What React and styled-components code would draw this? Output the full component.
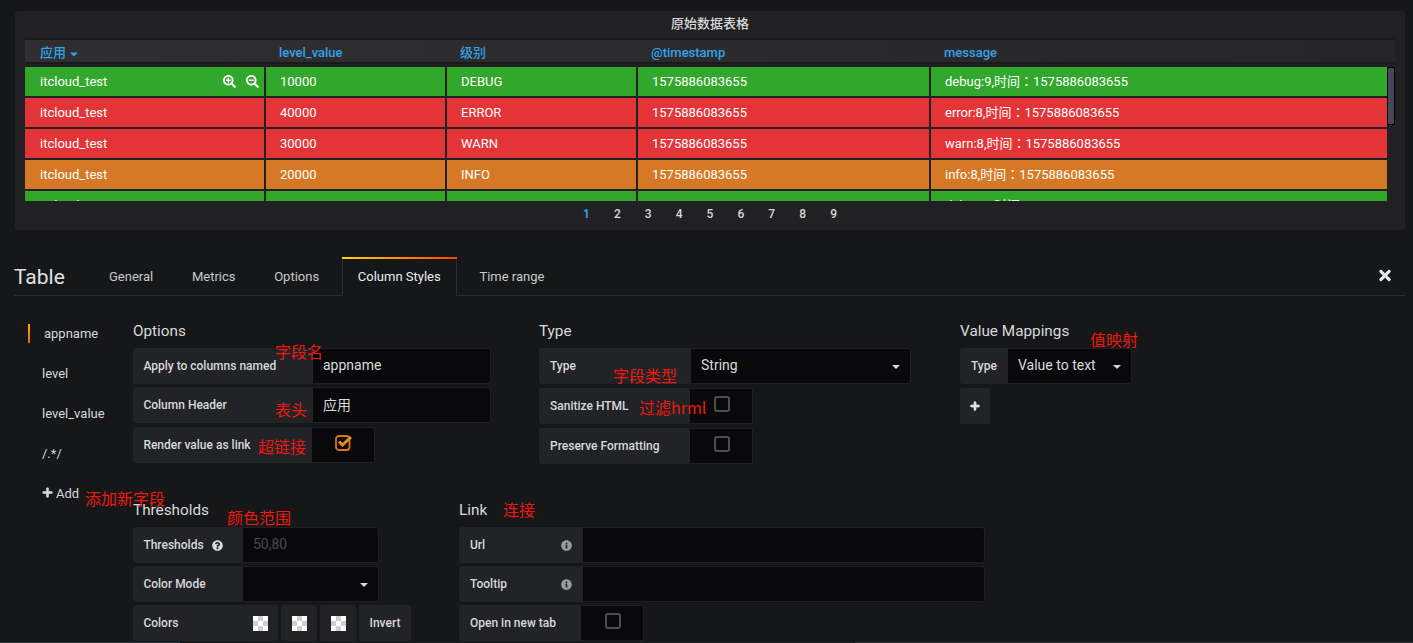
import React from 'react';
import styled, { createGlobalStyle } from 'styled-components';
import { FaSearchPlus, FaSearchMinus, FaCaretDown, FaTimes, FaPlus, FaInfoCircle, FaQuestionCircle } from 'react-icons/fa';

const Global = createGlobalStyle`
  html, body { margin: 0; padding: 0; background: #161719; }
  body { font-family: Roboto, "Noto Sans CJK SC", sans-serif; color: #d8d9da; font-size: 13px; overflow: hidden; }
  * { box-sizing: border-box; }
`;

const Page = styled.div`
  position: relative;
  width: 1413px;
  height: 643px;
  overflow: hidden;
  padding-top: 11px;
`;

const Panel = styled.section`
  width: 1390px;
  height: 219px;
  margin-left: 15px;
  background: #212124;
  border-radius: 3px;
  padding: 0 10px;
`;
const PanelTitle = styled.div`
  height: 27px;
  line-height: 25px;
  text-align: center;
  font-size: 13px;
  font-weight: 500;
  color: #d8d9da;
`;
const HeadRow = styled.div`
  display: grid;
  grid-template-columns: 241px 181px 191px 293px 1fr;
  height: 26px;
  border-top: 2px solid #1b1b1d;
  border-bottom: 2px solid #1b1b1d;
  background: linear-gradient(90deg, #2f2f32 0%, #2b2b2e 50%, #262628 100%);
`;
const HeadCell = styled.div`
  padding: 1px 0 0 13px;
  line-height: 24px;
  font-weight: 500;
  font-size: 13px;
  color: #33a2e5;
  display: flex;
  align-items: center;
  gap: 3px;
  svg { width: 10px; height: 12px; margin-top: 1px; }
  &:first-child { padding-left: 15px; }
`;
const Rows = styled.div`
  height: 137px;
  padding-top: 3px;
  overflow: hidden;
  position: relative;
`;
const Row = styled.div`
  display: grid;
  grid-template-columns: 239px 179px 189px 291px 456px;
  column-gap: 2px;
  margin-bottom: 2px;
  width: 1362px;
`;
const Cell = styled.div`
  height: 29px;
  background: ${p => p.$bg};
  color: #fff;
  font-family: Roboto, "Noto Sans CJK TC", sans-serif;
  font-size: 13px;
  line-height: 29px;
  padding-left: 14px;
  display: flex;
  justify-content: space-between;
  white-space: nowrap;
  &:first-child { padding-left: 15px; }
`;
const CellTools = styled.span`
  display: flex;
  align-items: center;
  gap: 10px;
  padding-right: 5px;
  svg { width: 13px; height: 13px; }
`;
const Scrollbar = styled.div`
  position: absolute;
  right: 0;
  top: 3px;
  width: 8px;
  height: 58px;
  background: #44465a;
  border: 1px solid #000;
  border-radius: 1px;
`;
const Pager = styled.div`
  height: 29px;
  padding-bottom: 4px;
  display: flex;
  justify-content: center;
  align-items: center;
`;
const PageNo = styled.span`
  width: 30.9px;
  text-align: center;
  font-size: 12px;
  font-weight: ${p => (p.$active ? 700 : 500)};
  color: ${p => (p.$active ? '#33a2e5' : '#d8d9da')};
`;

const Editor = styled.section`
  margin: 27px 8px 0 14px;
`;
const TabBar = styled.div`
  display: flex;
  align-items: flex-end;
  height: 39px;
  border-bottom: 1px solid #2c2d30;
  position: relative;
`;
const EditorTitle = styled.h2`
  margin: 0;
  width: 79px;
  font-size: 21px;
  font-weight: 400;
  line-height: 36px;
  color: #e0e0e1;
`;
const Tabs = styled.div`
  display: flex;
  gap: 6.7px;
`;
const Tab = styled.div`
  height: 39px;
  line-height: 40px;
  padding: 0 16px;
  font-size: 13px;
  color: ${p => (p.$active ? '#e9edf2' : '#c7c9cb')};
  margin-bottom: -1px;
  position: relative;
  ${p => p.$active && `
    background: #161719;
    border-left: 1px solid #2c2d30;
    border-right: 1px solid #2c2d30;
    padding: 0 15px;
    &::before {
      content: '';
      position: absolute;
      left: -1px; right: -1px; top: 0; height: 2px;
      background: linear-gradient(90deg, #ffd500, #ff4400);
    }
  `}
`;
const CloseBtn = styled.span`
  position: absolute;
  right: 14px;
  top: 10px;
  color: #e4e8ee;
  svg { width: 12px; height: 17px; display: block; }
`;
const Body = styled.div`
  display: flex;
  padding: 25px 0 0 14px;
`;
const SideNav = styled.nav`
  width: 105px;
  flex: none;
  padding-top: 3px;
`;
const NavItem = styled.div`
  height: 40px;
  line-height: 20px;
  font-size: 13px;
  color: #d8d9da;
  padding-left: ${p => (p.$active ? '16px' : '14px')};
  position: relative;
  ${p => p.$active && `
    &::before {
      content: '';
      position: absolute;
      left: 0; top: 0; height: 19px; width: 2px;
      background: linear-gradient(180deg, #ffb000, #ff5a00);
    }
  `}
`;
const AddItem = styled(NavItem)`
  display: flex;
  align-items: flex-start;
  gap: 3px;
  svg { width: 11px; height: 11px; margin-top: 3px; stroke: currentColor; stroke-width: 30; }
`;
const Main = styled.div`
  flex: 1;
  min-width: 0;
`;
const SectionRow = styled.div`
  display: flex;
  margin-bottom: ${p => p.$mb || 0}px;
`;
const Section = styled.div`
  width: ${p => p.$w}px;
  margin-right: ${p => p.$mr || 0}px;
  flex: none;
`;
const Heading = styled.h5`
  margin: 0 0 7px;
  height: 20px;
  line-height: 21px;
  font-size: 15.3px;
  font-weight: 400;
  color: #d8d9da;
`;
const FormRow = styled.div`
  display: flex;
  height: 36px;
  margin-bottom: ${p => p.$gap ?? 4}px;
`;
const Label = styled.label`
  width: ${p => p.$w}px;
  flex: none;
  background: #212327;
  border-radius: 3px 0 0 3px;
  padding: 0 11px;
  font-size: 12px;
  font-weight: 500;
  color: #d8d9da;
  display: flex;
  align-items: center;
  justify-content: ${p => (p.$between ? 'space-between' : 'flex-start')};
  gap: 8px;
  white-space: nowrap;
  svg { flex: none; }
`;
const TightLabel = styled(Label)`
  padding-left: 10.4px;
`;
const InfoGlyph = styled(FaInfoCircle)`
  width: 11px; height: 11px; color: #9a9b9d;
`;
const QuestionGlyph = styled(FaQuestionCircle)`
  width: 11px; height: 11px; color: #d8d9da;
`;
const Field = styled.div`
  width: ${p => p.$w}px;
  flex: none;
  background: #09090b;
  border: 1px solid #1f2023;
  border-left: 0;
  border-radius: 0 3px 3px 0;
  padding-left: 10px;
  padding-right: 10px;
  font-size: 14px;
  color: ${p => (p.$muted ? '#4a4b4d' : '#d8d9da')};
  display: flex;
  align-items: center;
  justify-content: space-between;
  padding-bottom: 3px;
`;
const Caret = styled.span`
  width: 0;
  height: 0;
  border-left: 4px solid transparent;
  border-right: 4px solid transparent;
  border-top: 4px solid #d8d9da;
  margin-top: 5px;
`;
const CheckCell = styled.div`
  width: 63px;
  flex: none;
  background: #09090b;
  border: 1px solid #1f2023;
  border-left: 0;
  display: flex;
  align-items: center;
  justify-content: center;
  padding: 0 0 4px 1px;
`;
const EmptyBox = styled.span`
  width: 16px;
  height: 16px;
  border: 2px solid #4b4d50;
  border-radius: 3px;
  display: block;
`;
const CheckIcon = styled.svg`
  display: block;
`;
const SwatchBtn = styled.div`
  width: ${p => p.$w || 36}px;
  flex: none;
  margin-right: 3px;
  background: #212327;
  border-radius: 2px;
  display: flex;
  align-items: center;
  justify-content: center;
  font-size: 12px;
  font-weight: 500;
  color: #d8d9da;
`;
const Swatch = styled.span`
  width: 15px;
  height: 15px;
  display: block;
  background-image: conic-gradient(#cfcfcf 25%, #fff 0 50%, #cfcfcf 0 75%, #fff 0);
  background-size: 10px 10px;
`;
const PlusBtn = styled.div`
  width: 30px;
  height: 36px;
  background: #212327;
  border-radius: 2px;
  display: flex;
  align-items: center;
  justify-content: center;
  color: #e4e4e4;
  svg { width: 10px; height: 10px; stroke: currentColor; stroke-width: 40; }
`;
const Note = styled.span`
  position: absolute;
  left: ${p => p.$x}px;
  top: ${p => p.$y}px;
  font-family: "Noto Sans CJK SC", "Liberation Sans", sans-serif;
  font-size: 16px;
  line-height: 20px;
  color: #f0170f;
  white-space: nowrap;
`;
const BottomEdge = styled.div`
  position: absolute;
  left: 0; right: 0; bottom: 0;
  height: 1px;
  background: linear-gradient(90deg, #2c3a40 0 180px, #1c1e20 180px 855px, #2b3135 855px);
`;

const G = '#31a72c', R = '#e33537', O = '#d67926';
const data = [
  [G, '10000', 'DEBUG', 'debug:9,时间：1575886083655', true],
  [R, '40000', 'ERROR', 'error:8,时间：1575886083655'],
  [R, '30000', 'WARN', 'warn:8,时间：1575886083655'],
  [O, '20000', 'INFO', 'info:8,时间：1575886083655'],
  [G, '10000', 'DEBUG', 'debug:9,时间：1575886083655'],
];

const CheckedBox = () => (
  <CheckIcon width="18" height="16" viewBox="0 0 18 16" fill="none">
    <rect x="1" y="1" width="13.5" height="14" rx="3" stroke="#d9781a" strokeWidth="1.8" />
    <path d="M4 6.5 L7.5 10 L16 2" stroke="#f08a1d" strokeWidth="3" />
  </CheckIcon>
);

export default function App() {
  return (
    <Page>
      <Global />
      <Panel>
        <PanelTitle>原始数据表格</PanelTitle>
        <HeadRow>
          <HeadCell>应用<FaCaretDown /></HeadCell>
          <HeadCell>level_value</HeadCell>
          <HeadCell>级别</HeadCell>
          <HeadCell>@timestamp</HeadCell>
          <HeadCell>message</HeadCell>
        </HeadRow>
        <Rows>
          {data.map(([bg, v, l, m, tools], i) => (
            <Row key={i}>
              <Cell $bg={bg}>
                itcloud_test
                {tools && <CellTools><FaSearchPlus /><FaSearchMinus /></CellTools>}
              </Cell>
              <Cell $bg={bg}>{v}</Cell>
              <Cell $bg={bg}>{l}</Cell>
              <Cell $bg={bg}>1575886083655</Cell>
              <Cell $bg={bg}>{m}</Cell>
            </Row>
          ))}
          <Scrollbar />
        </Rows>
        <Pager>
          {[1, 2, 3, 4, 5, 6, 7, 8, 9].map(n => <PageNo key={n} $active={n === 1}>{n}</PageNo>)}
        </Pager>
      </Panel>

      <Editor>
        <TabBar>
          <EditorTitle>Table</EditorTitle>
          <Tabs>
            <Tab>General</Tab>
            <Tab>Metrics</Tab>
            <Tab>Options</Tab>
            <Tab $active>Column Styles</Tab>
            <Tab>Time range</Tab>
          </Tabs>
          <CloseBtn><FaTimes /></CloseBtn>
        </TabBar>
        <Body>
          <SideNav>
            <NavItem $active>appname</NavItem>
            <NavItem>level</NavItem>
            <NavItem>level_value</NavItem>
            <NavItem>/.*/</NavItem>
            <AddItem><FaPlus />Add</AddItem>
          </SideNav>
          <Main>
            <SectionRow $mb={32}>
              <Section $w={358} $mr={48}>
                <Heading>Options</Heading>
                <FormRow $gap={3}><TightLabel $w={180}>Apply to columns named</TightLabel><Field $w={178}>appname</Field></FormRow>
                <FormRow><TightLabel $w={180}>Column Header</TightLabel><Field $w={178}>应用</Field></FormRow>
                <FormRow><TightLabel $w={179}>Render value as link</TightLabel><CheckCell><CheckedBox /></CheckCell></FormRow>
              </Section>
              <Section $w={372} $mr={49}>
                <Heading>Type</Heading>
                <FormRow><Label $w={152}>Type</Label><Field $w={220}>String<Caret /></Field></FormRow>
                <FormRow><Label $w={151}>Sanitize HTML</Label><CheckCell><EmptyBox /></CheckCell></FormRow>
                <FormRow><Label $w={151}>Preserve Formatting</Label><CheckCell><EmptyBox /></CheckCell></FormRow>
              </Section>
              <Section $w={172}>
                <Heading>Value Mappings</Heading>
                <FormRow><Label $w={48}>Type</Label><Field $w={124}>Value to text<Caret /></Field></FormRow>
                <PlusBtn><FaPlus /></PlusBtn>
              </Section>
            </SectionRow>
            <SectionRow>
              <Section $w={278} $mr={48}>
                <Heading>Thresholds</Heading>
                <FormRow $gap={3}><TightLabel $w={110}>Thresholds<QuestionGlyph /></TightLabel><Field $w={136} $muted>50,80</Field></FormRow>
                <FormRow $gap={3}><TightLabel $w={110}>Color Mode</TightLabel><Field $w={136}><span /><Caret /></Field></FormRow>
                <FormRow $gap={3}>
                  <TightLabel $w={110}>Colors</TightLabel>
                  <SwatchBtn $w={35}><Swatch /></SwatchBtn>
                  <SwatchBtn><Swatch /></SwatchBtn>
                  <SwatchBtn><Swatch /></SwatchBtn>
                  <SwatchBtn $w={52}>Invert</SwatchBtn>
                </FormRow>
              </Section>
              <Section $w={526}>
                <Heading>Link</Heading>
                <FormRow $gap={3}><Label $w={124} $between>Url<InfoGlyph /></Label><Field $w={402} /></FormRow>
                <FormRow $gap={3}><Label $w={124} $between>Tooltip<InfoGlyph /></Label><Field $w={402} /></FormRow>
                <FormRow $gap={3}><Label $w={122}>Open in new tab</Label><CheckCell><EmptyBox /></CheckCell></FormRow>
              </Section>
            </SectionRow>
          </Main>
        </Body>
      </Editor>

      <Note $x={275} $y={341}>字段名</Note>
      <Note $x={275} $y={399}>表头</Note>
      <Note $x={258} $y={436}>超链接</Note>
      <Note $x={613} $y={365}>字段类型</Note>
      <Note $x={639} $y={397}>过滤hrml</Note>
      <Note $x={1090} $y={329}>值映射</Note>
      <Note $x={85} $y={488}>添加新字段</Note>
      <Note $x={227} $y={507}>颜色范围</Note>
      <Note $x={503} $y={499}>连接</Note>
      <BottomEdge />
    </Page>
  );
}
